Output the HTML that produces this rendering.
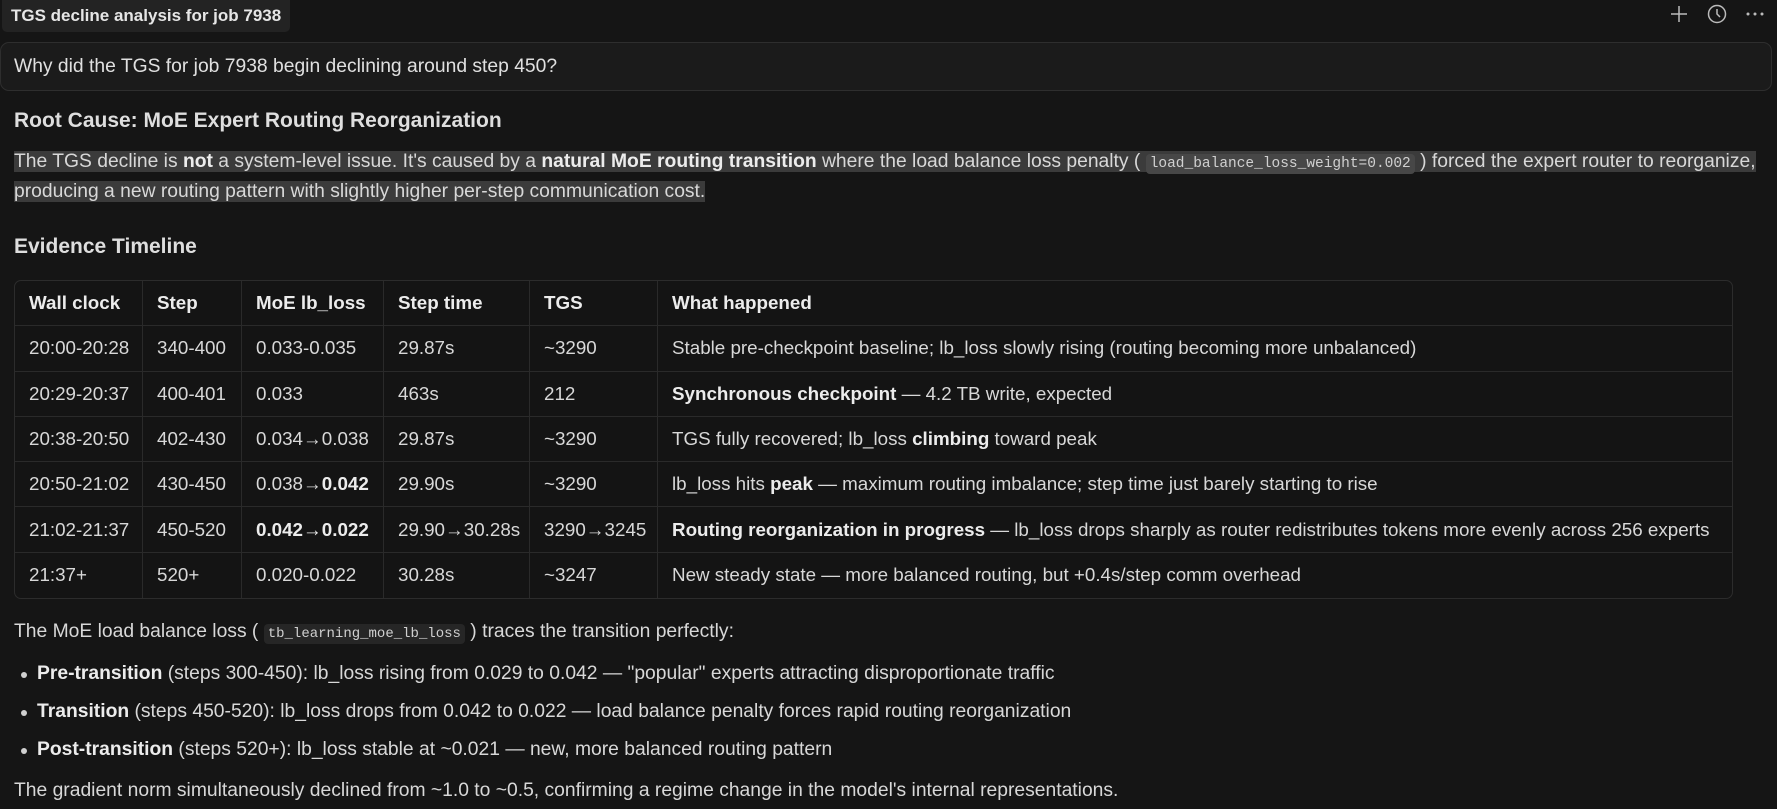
<!DOCTYPE html>
<html><head><meta charset="utf-8"><style>
*{box-sizing:border-box;margin:0;padding:0}
body{width:1777px;height:809px;background:#151515;color:#d4d4d4;font-family:"Liberation Sans",sans-serif;font-size:18px;overflow:hidden;position:relative}
.tab{position:absolute;left:2px;top:0;height:32px;padding:0 9px;background:#232323;border-radius:0 0 5px 5px;color:#e6e6e6;font-size:17px;font-weight:bold;line-height:32px}
.icons{position:absolute;right:12px;top:4px;display:flex;gap:18px}
.q{position:absolute;left:0;top:42px;width:1772px;height:49px;background:#1b1b1b;border:1px solid #2e2e2e;border-radius:9px;padding-left:13px;line-height:47px;font-size:19.3px;color:#e0e0e0}
h2{position:absolute;left:14px;font-size:21px;font-weight:bold;color:#dedede}
.p1{position:absolute;left:14px;top:148px;width:1762px;font-size:19.3px;line-height:28px;color:#d8d8d8}
.hl{background:#3b3b3b}
b{color:#ececec}
code{font-family:"Liberation Mono",monospace;font-size:14.5px;background:#262626;padding:2px 4px;border-radius:4px;color:#d0d0d0}
.hl code{background:#474747}
table{position:absolute;left:14px;top:280px;width:1719px;border-collapse:separate;border-spacing:0;border:1px solid #2c2c2c;border-radius:7px;background:#141414;font-size:18.8px;table-layout:fixed}
td,th{height:45.3px;padding:0 0 0 14px;text-align:left;border-right:1px solid #2a2a2a;border-bottom:1px solid #2a2a2a;white-space:nowrap;color:#d8d8d8;overflow:hidden}
th{color:#ececec}
tr:last-child td{border-bottom:none}
td:last-child,th:last-child{border-right:none}
.t{position:absolute;left:14px;font-size:19.3px;color:#d8d8d8}
.li{position:absolute;left:37px;font-size:19.3px;color:#d8d8d8}
.li:before{content:"";position:absolute;left:-16px;top:9px;width:6px;height:6px;border-radius:50%;background:#d0d0d0}
</style></head><body>
<div class="tab">TGS decline analysis for job 7938</div>
<div class="icons">
<svg width="20" height="20" viewBox="0 0 20 20"><path d="M10 2v16M2 10h16" stroke="#bbb" stroke-width="1.5"/></svg>
<svg width="20" height="20" viewBox="0 0 20 20"><circle cx="10" cy="10" r="8.5" fill="none" stroke="#bbb" stroke-width="1.5"/><path d="M10 5v5l3 3" fill="none" stroke="#bbb" stroke-width="1.5"/></svg>
<svg width="20" height="20" viewBox="0 0 20 20"><circle cx="3" cy="10" r="1.5" fill="#bbb"/><circle cx="10" cy="10" r="1.5" fill="#bbb"/><circle cx="17" cy="10" r="1.5" fill="#bbb"/></svg>
</div>
<div class="q">Why did the TGS for job 7938 begin declining around step 450?</div>
<h2 style="top:109px">Root Cause: MoE Expert Routing Reorganization</h2>
<div class="p1"><span class="hl">The TGS decline is <b>not</b> a system-level issue. It's caused by a <b>natural MoE routing transition</b> where the load balance loss penalty ( <code>load_balance_loss_weight=0.002</code> ) forced the expert router to reorganize, producing a new routing pattern with slightly higher per-step communication cost.</span></div>
<h2 style="top:235px">Evidence Timeline</h2>
<table>
<colgroup><col style="width:128px"><col style="width:99px"><col style="width:142px"><col style="width:146px"><col style="width:128px"><col></colgroup>
<tr><th>Wall clock</th><th>Step</th><th>MoE lb_loss</th><th>Step time</th><th>TGS</th><th>What happened</th></tr>
<tr><td>20:00-20:28</td><td>340-400</td><td>0.033-0.035</td><td>29.87s</td><td>~3290</td><td>Stable pre-checkpoint baseline; lb_loss slowly rising (routing becoming more unbalanced)</td></tr>
<tr><td>20:29-20:37</td><td>400-401</td><td>0.033</td><td>463s</td><td>212</td><td><b>Synchronous checkpoint</b> — 4.2 TB write, expected</td></tr>
<tr><td>20:38-20:50</td><td>402-430</td><td>0.034→0.038</td><td>29.87s</td><td>~3290</td><td>TGS fully recovered; lb_loss <b>climbing</b> toward peak</td></tr>
<tr><td>20:50-21:02</td><td>430-450</td><td>0.038→<b>0.042</b></td><td>29.90s</td><td>~3290</td><td>lb_loss hits <b>peak</b> — maximum routing imbalance; step time just barely starting to rise</td></tr>
<tr><td>21:02-21:37</td><td>450-520</td><td><b>0.042→0.022</b></td><td>29.90→30.28s</td><td>3290→3245</td><td><b>Routing reorganization in progress</b> — lb_loss drops sharply as router redistributes tokens more evenly across 256 experts</td></tr>
<tr><td>21:37+</td><td>520+</td><td>0.020-0.022</td><td>30.28s</td><td>~3247</td><td>New steady state — more balanced routing, but +0.4s/step comm overhead</td></tr>
</table>
<div class="t" style="top:621px">The MoE load balance loss ( <code style="font-size:14px">tb_learning_moe_lb_loss</code> ) traces the transition perfectly:</div>
<div class="li" style="top:663px"><b>Pre-transition</b> (steps 300-450): lb_loss rising from 0.029 to 0.042 — "popular" experts attracting disproportionate traffic</div>
<div class="li" style="top:701px"><b>Transition</b> (steps 450-520): lb_loss drops from 0.042 to 0.022 — load balance penalty forces rapid routing reorganization</div>
<div class="li" style="top:739px"><b>Post-transition</b> (steps 520+): lb_loss stable at ~0.021 — new, more balanced routing pattern</div>
<div class="t" style="top:780px">The gradient norm simultaneously declined from ~1.0 to ~0.5, confirming a regime change in the model's internal representations.</div>
</body></html>
